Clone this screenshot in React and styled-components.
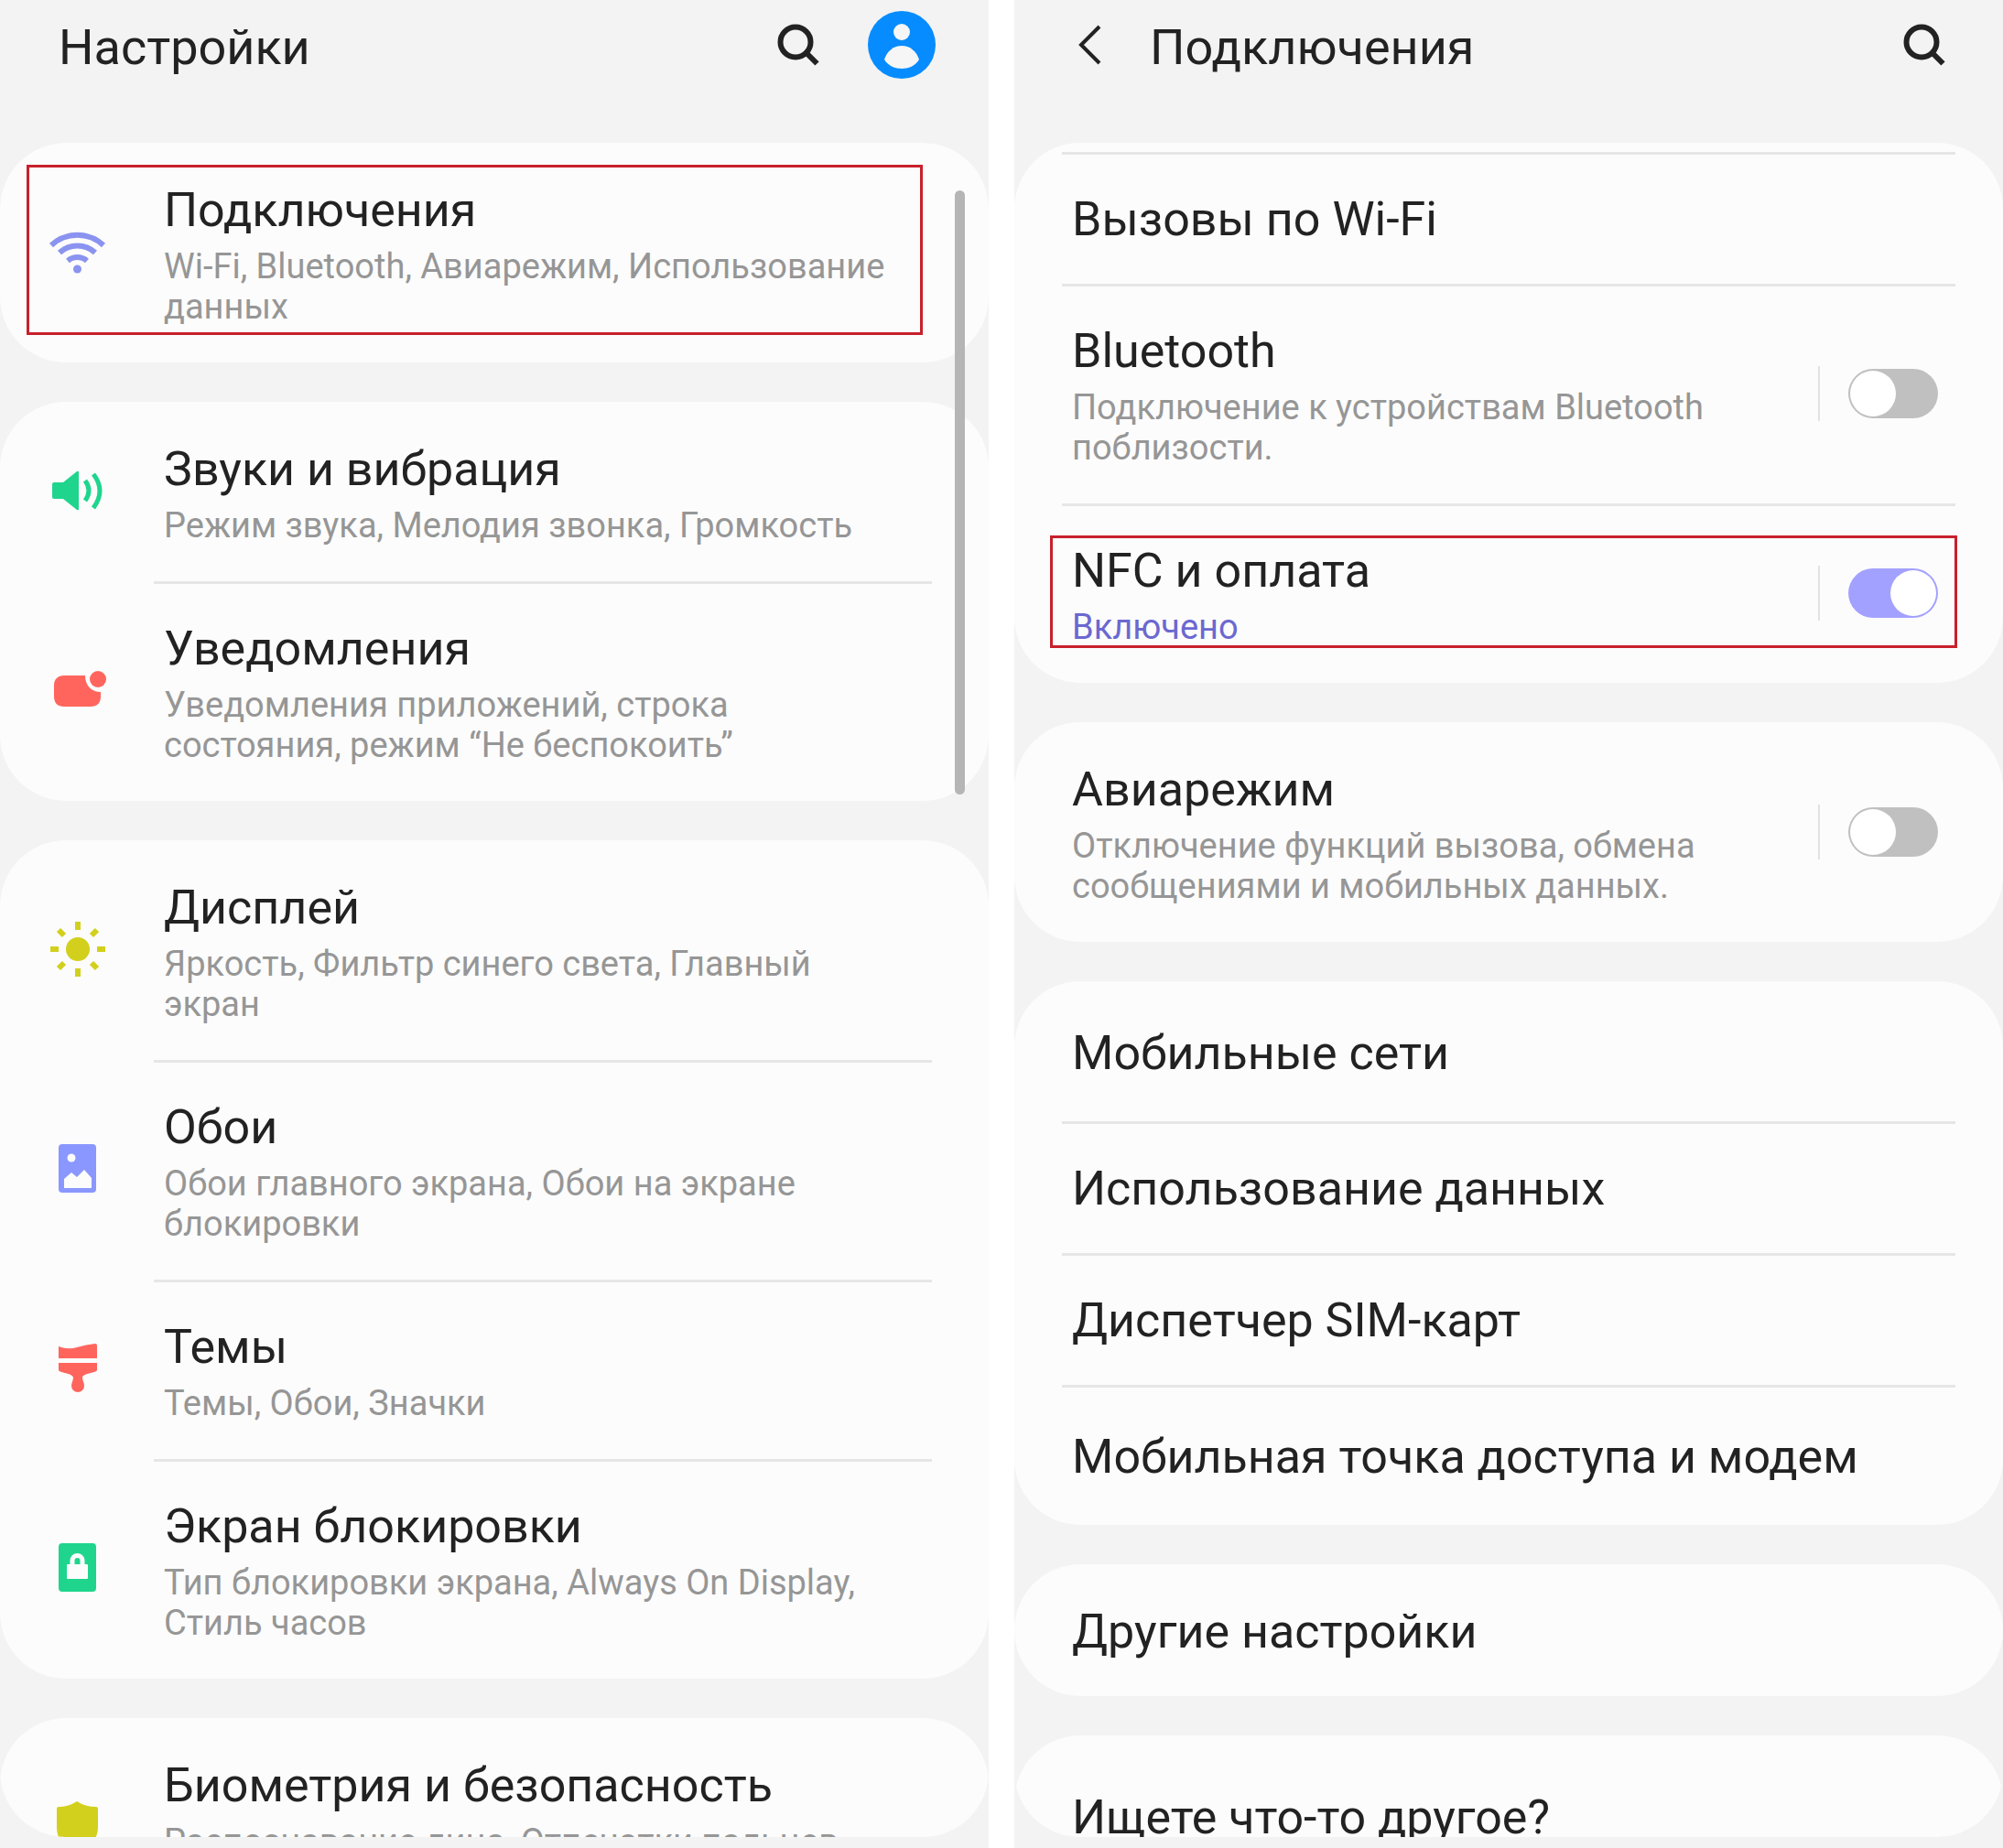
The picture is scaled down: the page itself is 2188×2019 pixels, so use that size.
import { useState } from "react";
import styled, { createGlobalStyle } from "styled-components";

const GlobalStyle = createGlobalStyle`
  * {
    box-sizing: border-box;
  }

  body {
    margin: 0;
    background: #ffffff;
    color: #222222;
    font-family: Roboto, "Noto Sans", sans-serif;
  }
`;

const SearchIcon = () => (
  <svg width="48" height="48" viewBox="0 0 48 48" fill="none" stroke="#222222">
    <circle cx="21" cy="21" r="16.5" strokeWidth="6" />
    <path d="M32 32l12.500 12.500" strokeWidth="6" />
  </svg>
);

const BackIcon = () => (
  <svg width="32" height="44" viewBox="0 0 32 44" fill="none" stroke="#222222">
    <path d="M29 2L9 22l20 20" strokeWidth="4" />
  </svg>
);

const AvatarIcon = () => (
  <svg width="74" height="74" viewBox="0 0 74 74">
    <circle cx="37" cy="37" r="37" fill="#068cff" />
    <circle cx="37" cy="23" r="9" fill="#f6f6f6" />
    <path
      d="M37 38c9 0 16 6 19 15-4 7-12 10-19 10s-15-3-19-10c3-9 10-15 19-15z"
      fill="#f6f6f6"
    />
  </svg>
);

const WifiIcon = () => (
  <svg width="64" height="64" viewBox="0 0 64 64" fill="none" stroke="#8b93f0">
    <path d="M4 24a42 42 0 0 1 57 0" strokeWidth="6" />
    <path d="M13 32a29 29 0 0 1 39 0" strokeWidth="6" />
    <path d="M22 41a16 16 0 0 1 21 0" strokeWidth="6" />
    <circle cx="32.500" cy="50" r="4.500" fill="#8b93f0" stroke="none" />
  </svg>
);

const SoundIcon = () => (
  <svg width="64" height="64" viewBox="0 0 64 64" fill="#1fd58d">
    <path d="M7 22h10l15-12q2-1 2 1v40q0 2-2 1L17 40H7q-2 0-2-2V24q0-2 2-2z" />
    <path
      d="M41 20q8 11 0 22M50 13q14 18 0 37"
      fill="none"
      stroke="#1fd58d"
      strokeWidth="5"
    />
  </svg>
);

const NotificationIcon = () => (
  <svg width="64" height="64" viewBox="0 0 64 64" fill="#ff655d">
    <path d="M18 15h23c0 11 7 18 17 18v5c0 7-4 11-11 11H18C11 49 7 45 7 38V26c0-7 4-11 11-11z" />
    <circle cx="55" cy="19" r="9" />
  </svg>
);

const SunIcon = () => (
  <svg width="64" height="64" viewBox="0 0 64 64" fill="#d2d01c">
    <circle cx="33" cy="31" r="13" />
    <path
      d="M33 1v9M33 52v9M3 31h9M54 31h9M12 10l6 6M48 46l6 6M54 10l-6 6M18 46l-6 6"
      stroke="#d2d01c"
      strokeWidth="6"
    />
  </svg>
);

const WallpaperIcon = () => (
  <svg width="64" height="64" viewBox="0 0 64 64">
    <rect x="12" y="4" width="41" height="53" rx="4" fill="#8a97ff" />
    <circle cx="26" cy="19" r="4.500" fill="#fcfcfc" />
    <path d="M18 52V42l8-7 6 5 8-8 8 9v11z" fill="#fcfcfc" />
  </svg>
);

const ThemeIcon = () => (
  <svg width="64" height="64" viewBox="0 0 64 64" fill="#ff655d">
    <path d="M12 7q10 4 20 1t20-4q2 0 2 2v14H12z" />
    <path d="M12 25h42v8c-1 3-15 3-16 8 0 3 2 6 2 9a7 7 0 0 1-14 0c0-3 2-6 2-9-1-5-15-5-16-8z" />
  </svg>
);

const LockIcon = () => (
  <svg width="64" height="64" viewBox="0 0 64 64">
    <rect x="12" y="4" width="41" height="53" rx="4" fill="#1fd58d" />
    <rect x="21" y="27" width="23" height="16" rx="1" fill="#fcfcfc" />
    <path
      d="M27 28v-5a5.500 5.500 0 0 1 11 0v5"
      fill="none"
      stroke="#fcfcfc"
      strokeWidth="5"
    />
  </svg>
);

const ShieldIcon = () => (
  <svg width="64" height="64" viewBox="0 0 64 64" fill="#d2d01c">
    <path d="M32 3q9 6 21 6 2 0 2 2v20c0 14-9 23-23 29C18 54 10 45 10 31V11q0-2 2-2 11 0 20-6z" />
  </svg>
);

const settings = [
  [
    {
      title: "Подключения",
      note: "Wi-Fi, Bluetooth, Авиарежим, Использование данных",
      icon: <WifiIcon />,
      marked: true,
    },
  ],
  [
    {
      title: "Звуки и вибрация",
      note: "Режим звука, Мелодия звонка, Громкость",
      icon: <SoundIcon />,
    },
    {
      title: "Уведомления",
      note: "Уведомления приложений, строка состояния, режим “Не беспокоить”",
      icon: <NotificationIcon />,
    },
  ],
  [
    {
      title: "Дисплей",
      note: "Яркость, Фильтр синего света, Главный экран",
      icon: <SunIcon />,
    },
    {
      title: "Обои",
      note: "Обои главного экрана, Обои на экране блокировки",
      icon: <WallpaperIcon />,
    },
    {
      title: "Темы",
      note: "Темы, Обои, Значки",
      icon: <ThemeIcon />,
    },
    {
      title: "Экран блокировки",
      note: "Тип блокировки экрана, Always On Display, Стиль часов",
      icon: <LockIcon />,
    },
  ],
  [
    {
      title: "Биометрия и безопасность",
      note: "Распознавание лица, Отпечатки пальцев",
      icon: <ShieldIcon />,
      large: true,
    },
  ],
];

const Switch = ({ label, initial = false }) => {
  const [on, setOn] = useState(initial);
  return (
    <SwitchArea>
      <SwitchInput
        type="checkbox"
        role="switch"
        aria-label={label}
        checked={on}
        onChange={() => setOn(!on)}
      />
    </SwitchArea>
  );
};

const SettingsScreen = () => (
  <Screen>
    <Header>
      <HeaderTitle>Настройки</HeaderTitle>
      <IconButton aria-label="Поиск">
        <SearchIcon />
      </IconButton>
      <IconButton aria-label="Профиль">
        <AvatarIcon />
      </IconButton>
    </Header>
    <List>
      {settings.map((group) => (
        <Card key={group[0].title}>
          {group.map(({ title, note, icon, marked, large }) => (
            <IconRow key={title} $marked={marked} $large={large}>
              <IconCell>{icon}</IconCell>
              <IconRowBody>
                <RowTitle>{title}</RowTitle>
                <RowNote>{note}</RowNote>
              </IconRowBody>
            </IconRow>
          ))}
        </Card>
      ))}
      <ScrollThumb />
    </List>
  </Screen>
);

const ConnectionsScreen = () => (
  <Screen>
    <Header $inner>
      <IconButton aria-label="Назад">
        <BackIcon />
      </IconButton>
      <HeaderTitle>Подключения</HeaderTitle>
      <IconButton aria-label="Поиск">
        <SearchIcon />
      </IconButton>
    </Header>
    <List>
      <Card $scrolled>
        <Row>
          <RowText>
            <RowTitle>Вызовы по Wi-Fi</RowTitle>
          </RowText>
        </Row>
        <Row>
          <RowText>
            <RowTitle>Bluetooth</RowTitle>
            <RowNote>Подключение к устройствам Bluetooth поблизости.</RowNote>
          </RowText>
          <Switch label="Bluetooth" />
        </Row>
        <Row $marked>
          <RowText>
            <RowTitle>NFC и оплата</RowTitle>
            <RowNote $active>Включено</RowNote>
          </RowText>
          <Switch label="NFC и оплата" initial />
        </Row>
      </Card>
      <Card>
        <Row>
          <RowText>
            <RowTitle>Авиарежим</RowTitle>
            <RowNote>
              Отключение функций вызова, обмена сообщениями и мобильных данных.
            </RowNote>
          </RowText>
          <Switch label="Авиарежим" />
        </Row>
      </Card>
      <Card>
        <Row>
          <RowText $tall>
            <RowTitle>Мобильные сети</RowTitle>
          </RowText>
        </Row>
        <Row>
          <RowText>
            <RowTitle>Использование данных</RowTitle>
          </RowText>
        </Row>
        <Row>
          <RowText>
            <RowTitle>Диспетчер SIM-карт</RowTitle>
          </RowText>
        </Row>
        <Row>
          <RowText $tall>
            <RowTitle>Мобильная точка доступа и модем</RowTitle>
          </RowText>
        </Row>
      </Card>
      <Card>
        <Row>
          <RowText>
            <RowTitle>Другие настройки</RowTitle>
          </RowText>
        </Row>
      </Card>
      <Card>
        <SearchMore>
          <RowTitle>Ищете что-то другое?</RowTitle>
        </SearchMore>
      </Card>
    </List>
  </Screen>
);

const App = () => {
  return (
    <Page>
      <GlobalStyle />
      <SettingsScreen />
      <ConnectionsScreen />
    </Page>
  );
};

const Page = styled.main`
  display: grid;
  grid-template-columns: 1fr 1fr;
  gap: 28px;
  height: 100vh;
`;

const Screen = styled.section`
  display: flex;
  flex-direction: column;
  min-width: 0;
  min-height: 0;
  padding-bottom: 12px;
  background: #f3f3f3;
`;

const Header = styled.header`
  display: flex;
  flex: none;
  align-items: center;
  gap: 52px;
  height: 156px;
  padding: 0 ${({ $inner }) => ($inner ? "62px" : "58px")} 58px 64px;
`;

const HeaderTitle = styled.h1`
  flex: 1;
  margin: 0;
  padding-top: 6px;
  font-size: 54px;
  font-weight: 400;
  line-height: 64px;
`;

const IconButton = styled.button`
  display: flex;
  padding: 0;
  border: 0;
  background: none;
  cursor: pointer;
`;

const List = styled.div`
  position: relative;
  display: flex;
  flex: 1;
  flex-direction: column;
  gap: 43px;
  min-height: 0;
  overflow: hidden;
  border-radius: 72px;
`;

const Card = styled.div`
  flex: none;
  padding-top: ${({ $scrolled }) => ($scrolled ? "10px" : "0")};
  border-radius: ${({ $scrolled }) => ($scrolled ? "0 0 72px 72px" : "72px")};
  background: #fcfcfc;

  &::before {
    content: "";
    display: ${({ $scrolled }) => ($scrolled ? "block" : "none")};
    height: 3px;
    margin: 0 52px -3px;
    background: #e6e6e6;
  }
`;

const Marked = styled.div`
  position: relative;

  &::after {
    content: "";
    position: absolute;
    display: ${({ $marked }) => ($marked ? "block" : "none")};
    border: 3px solid #c8202c;
    pointer-events: none;
  }
`;

const IconRow = styled(Marked)`
  display: flex;
  min-height: ${({ $large }) => ($large ? "240px" : "0")};
  padding-right: 62px;

  &::after {
    inset: 24px 72px 30px 29px;
  }
`;

const IconCell = styled.div`
  display: flex;
  flex: none;
  align-items: center;
  justify-content: center;
  width: 168px;
`;

const IconRowBody = styled.div`
  flex: 1;
  padding: 43px 40px 39px 11px;

  ${IconRow}:not(:last-child) > & {
    margin-bottom: -3px;
    border-bottom: 3px solid #e6e6e6;
  }
`;

const Row = styled(Marked)`
  display: flex;
  align-items: center;
  margin: 0 52px;
  padding: 0 19px 0 11px;

  &:not(:last-child) {
    margin-bottom: -3px;
    border-bottom: 3px solid #e6e6e6;
  }

  &::after {
    inset: 35px -2px 38px -13px;
  }
`;

const RowText = styled.div`
  flex: 1;
  padding: ${({ $tall }) => ($tall ? "48px 0 43px" : "43px 0 39px")};
`;

const SearchMore = styled.div`
  padding: 59px 63px 39px;
`;

const RowTitle = styled.h2`
  margin: 0;
  font-size: 52px;
  font-weight: 400;
  line-height: 62px;
`;

const RowNote = styled.p`
  margin: 8px 0 0;
  color: ${({ $active }) => ($active ? "#6c68d0" : "#969696")};
  font-size: 38px;
  line-height: 44px;
`;

const SwitchArea = styled.div`
  display: flex;
  flex: none;
  align-items: center;
  height: 60px;
  margin-left: 40px;
  padding-left: 31px;
  border-left: 2px solid #e2e2e2;
`;

const SwitchInput = styled.input`
  display: flex;
  width: 98px;
  height: 54px;
  margin: 0;
  padding: 2px;
  border-radius: 27px;
  background: #c0c0c0;
  appearance: none;
  cursor: pointer;

  &::before {
    content: "";
    width: 50px;
    height: 50px;
    border-radius: 50%;
    background: #ffffff;
  }

  &:checked {
    justify-content: flex-end;
    background: #a3a1ff;
  }
`;

const ScrollThumb = styled.div`
  position: absolute;
  top: 52px;
  right: 26px;
  width: 11px;
  height: 660px;
  border-radius: 6px;
  background: #b5b5b5;
`;

export default App;
